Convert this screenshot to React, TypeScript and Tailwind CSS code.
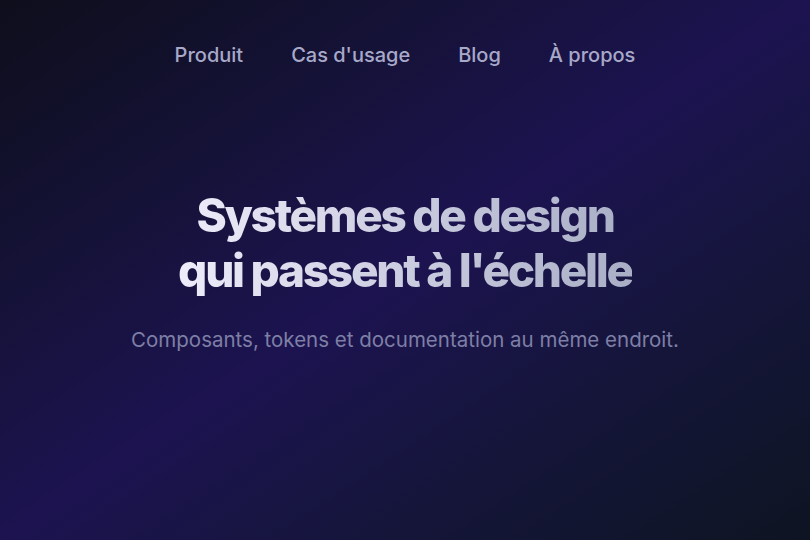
export default function App() {
  const links = ['Produit', "Cas d'usage", 'Blog', 'À propos']

  return (
    <div
      className="min-h-[540px] w-full bg-gradient-to-br from-[#0e0e1c] via-[#1c1350] to-[#0e1422] font-['Inter',sans-serif]"
    >
      <nav className="flex justify-center gap-12 pt-[41px]">
        {links.map((l) => (
          <a key={l} href="#" className="text-[20px] font-medium leading-[28px] text-[#a8a9c9]">
            {l}
          </a>
        ))}
      </nav>

      <section className="flex flex-col items-center pt-[119px] text-center">
        <h1 className="bg-gradient-to-r from-[#eeecfa] to-[#a9aec6] bg-clip-text text-[46px] font-extrabold leading-[55px] tracking-[-0.05em] text-transparent">
          Systèmes de design
          <br />
          qui passent à l'échelle
        </h1>
        <p className="mt-[28px] text-[20.5px] leading-[28px] text-[#7e7fa6]">
          Composants, tokens et documentation au même endroit.
        </p>
      </section>
    </div>
  )
}
